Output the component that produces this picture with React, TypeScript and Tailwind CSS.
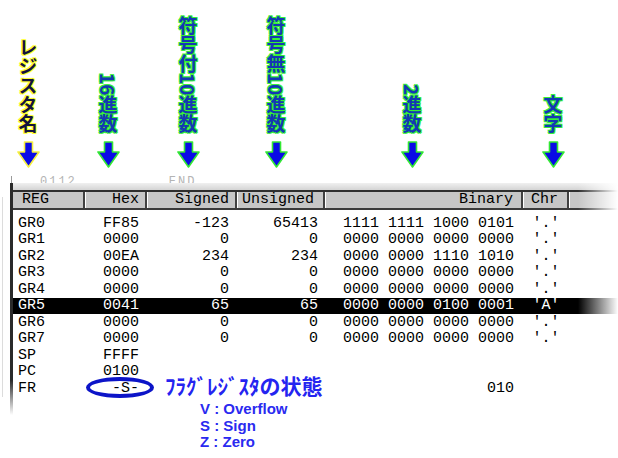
import React from "react";

type Row = {
  reg: string;
  hex: string;
  signed?: string;
  unsigned?: string;
  binary?: string;
  chr?: string;
  selected?: boolean;
};

const rows: Row[] = [
  { reg: "GR0", hex: "FF85", signed: "-123", unsigned: "65413", binary: "1111 1111 1000 0101", chr: "'.'" },
  { reg: "GR1", hex: "0000", signed: "0", unsigned: "0", binary: "0000 0000 0000 0000", chr: "'.'" },
  { reg: "GR2", hex: "00EA", signed: "234", unsigned: "234", binary: "0000 0000 1110 1010", chr: "'.'" },
  { reg: "GR3", hex: "0000", signed: "0", unsigned: "0", binary: "0000 0000 0000 0000", chr: "'.'" },
  { reg: "GR4", hex: "0000", signed: "0", unsigned: "0", binary: "0000 0000 0000 0000", chr: "'.'" },
  { reg: "GR5", hex: "0041", signed: "65", unsigned: "65", binary: "0000 0000 0100 0001", chr: "'A'", selected: true },
  { reg: "GR6", hex: "0000", signed: "0", unsigned: "0", binary: "0000 0000 0000 0000", chr: "'.'" },
  { reg: "GR7", hex: "0000", signed: "0", unsigned: "0", binary: "0000 0000 0000 0000", chr: "'.'" },
  { reg: "SP", hex: "FFFF" },
  { reg: "PC", hex: "0100" },
  { reg: "FR", hex: "-S-", binary: "010" },
];

const cols = "grid grid-cols-[72px_62px_90px_88px_198px_46px_1fr]";

function Arrow({ edge }: { edge: string }) {
  return (
    <svg width="23" height="27" viewBox="0 0 23 27">
      <path
        d="M7.5 1h8v10h6.5L11.5 26 1 11h6.5z"
        fill="#0a0ae6"
        stroke={edge}
        strokeWidth="1.6"
        strokeLinejoin="round"
      />
    </svg>
  );
}

function Callout({ text, yellow, className }: { text: string; yellow?: boolean; className: string }) {
  return (
    <div className={`flex w-[40px] flex-col items-center gap-[8px] ${className}`}>
      <div
        className={
          yellow
            ? "font-['Noto_Sans_CJK_JP',sans-serif] text-[19px] leading-none font-bold text-[#14143c] [writing-mode:vertical-rl] [text-shadow:0_0_2px_#ffff30,1px_1px_0_#ffff30,-1px_-1px_0_#ffff30,1px_-1px_0_#ffff30,-1px_1px_0_#ffff30]"
            : "font-['Noto_Sans_CJK_JP',sans-serif] text-[19px] leading-none font-bold text-[#1438b4] [writing-mode:vertical-rl] [text-shadow:0_0_1px_#22ee22,1px_1px_0_#3af03a,-1px_-1px_0_#3af03a,1px_-1px_0_#3af03a,-1px_1px_0_#3af03a]"
        }
      >
        {text}
      </div>
      <Arrow edge={yellow ? "#f6f040" : "#33e833"} />
    </div>
  );
}

export default function App() {
  return (
    <div className="relative h-[458px] w-[618px] overflow-hidden bg-white font-['Liberation_Mono',monospace] text-[15px] text-black">
      {/* column labels */}
      <div className="flex h-[170px] items-end pb-[2px]">
        <Callout text="レジスタ名" yellow className="ml-[8px]" />
        <Callout text="16進数" className="ml-[40px]" />
        <Callout text="符号付10進数" className="ml-[40px]" />
        <Callout text="符号無10進数" className="ml-[48px]" />
        <Callout text="2進数" className="ml-[96px]" />
        <Callout text="文字" className="ml-[101px]" />
      </div>

      {/* clipped line of the window behind */}
      <div className="flex h-[13px] overflow-hidden pt-[6px] text-[12px] leading-none text-[#b4b4b4]">
        <span className="ml-[11px] h-[7px] w-px bg-[#9a9a9a]" />
        <span className="ml-[28px] tracking-[2px]">0112</span>
        <span className="ml-[92px] tracking-[2px]">END</span>
      </div>

      {/* register window */}
      <div className="flex">
        <div className="ml-[2px] mt-[14px] h-[200px] w-px bg-[#dcdcdc]" />
        <div className="ml-[7px] h-[232px] w-[3px] bg-gradient-to-b from-[#2a2a2a] from-85% to-transparent" />
        <div className="flex-1">
          <div className="h-[7px] bg-gradient-to-b from-[#f0f0f0] to-[#d4d4d4]" />
          <div className={`${cols} h-[20px] border-y-2 border-t-[#2e2e2e] border-b-[#3a3a3a] bg-[#c6c6c6] leading-[16px]`}>
            <div className="border-r-2 border-[#404040] pl-[9px]">REG</div>
            <div className="border-r-2 border-l border-l-white border-r-[#404040] pr-[6px] text-right">Hex</div>
            <div className="border-r-2 border-l border-l-white border-r-[#404040] pr-[6px] text-right">Signed</div>
            <div className="border-r-2 border-l border-l-white border-r-[#404040] pl-[4px]">Unsigned</div>
            <div className="border-r-2 border-l border-l-white border-r-[#404040] pr-[8px] text-right">Binary</div>
            <div className="border-r-2 border-l border-l-white border-r-[#404040] pl-[7px]">Chr</div>
            <div className="border-l border-white" />
          </div>
          <div className="pt-[5px]">
            {rows.map((r) => (
              <div
                key={r.reg}
                className={`${cols} h-[16.5px] items-center leading-none ${
                  r.selected ? "bg-black text-white" : ""
                }`}
              >
                <div className="pl-[5px]">{r.reg}</div>
                <div className="pr-[8px] text-right">{r.hex}</div>
                <div className="pr-[8px] text-right">{r.signed}</div>
                <div className="pr-[7px] text-right">{r.unsigned}</div>
                <div className="pr-[9px] text-right">{r.binary}</div>
                <div className="text-center">{r.chr}</div>
                <div />
              </div>
            ))}
          </div>
        </div>
      </div>

      {/* right edge fade */}
      <div className="absolute top-[176px] right-0 h-[240px] w-[40px] bg-gradient-to-r from-transparent to-white" />

      {/* flag register callout */}
      <div className="absolute top-[377px] left-[86px] h-[21px] w-[68px] rounded-[50%] border-4 border-[#0c14c8]" />
      <div className="absolute top-[372px] left-[165px] font-['Noto_Sans_CJK_JP',sans-serif] text-[21px] leading-tight font-bold text-[#2424f0]">
        ﾌﾗｸﾞﾚｼﾞｽﾀの状態
      </div>
      <div className="absolute top-[401px] left-[200px] font-['Liberation_Sans',sans-serif] text-[15px] leading-[16.5px] font-bold text-[#2a2af0]">
        <div>V : Overflow</div>
        <div>S : Sign</div>
        <div>Z : Zero</div>
      </div>
    </div>
  );
}
